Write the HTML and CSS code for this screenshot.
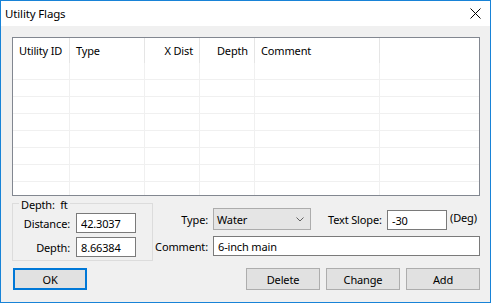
FILE: index.html
```html
<!DOCTYPE html>
<html>
<head>
<meta charset="utf-8">
<title>Utility Flags</title>
<link rel="stylesheet" href="styles.css">
</head>
<body>
<div class="window">
  <div class="titlebar">
    <span class="title">Utility Flags</span>
    <svg class="close" width="11" height="11" viewBox="0 0 11 11"><path d="M0.5 0.5L10.5 10.5M10.5 0.5L0.5 10.5" stroke="#000" stroke-width="1" fill="none"/></svg>
  </div>
  <div class="content">
    <div class="list">
      <div class="grid">
        <div class="hd">Utility ID</div>
        <div class="hd">Type</div>
        <div class="hd r">X Dist</div>
        <div class="hd r">Depth</div>
        <div class="hd">Comment</div>
        <div class="hd last"></div>

        <div class="cell"></div><div class="cell"></div><div class="cell"></div><div class="cell"></div><div class="cell"></div><div class="cell last"></div>
        <div class="cell"></div><div class="cell"></div><div class="cell"></div><div class="cell"></div><div class="cell"></div><div class="cell last"></div>
        <div class="cell"></div><div class="cell"></div><div class="cell"></div><div class="cell"></div><div class="cell"></div><div class="cell last"></div>
        <div class="cell"></div><div class="cell"></div><div class="cell"></div><div class="cell"></div><div class="cell"></div><div class="cell last"></div>
        <div class="cell"></div><div class="cell"></div><div class="cell"></div><div class="cell"></div><div class="cell"></div><div class="cell last"></div>
        <div class="cell"></div><div class="cell"></div><div class="cell"></div><div class="cell"></div><div class="cell"></div><div class="cell last"></div>
        <div class="cell"></div><div class="cell"></div><div class="cell"></div><div class="cell"></div><div class="cell"></div><div class="cell last"></div>
        <div class="cell"></div><div class="cell"></div><div class="cell"></div><div class="cell"></div><div class="cell"></div><div class="cell last"></div>
      </div>
    </div>

    <div class="lower">
      <fieldset class="group">
        <legend class="legend">Depth:&nbsp; ft</legend>
        <div class="field">
          <span class="flabel">Distance:</span>
          <input class="textbox short" type="text" value="42.3037">
        </div>
        <div class="field">
          <span class="flabel">Depth:</span>
          <input class="textbox short" type="text" value="8.66384">
        </div>
      </fieldset>

      <div class="right">
        <span class="rlabel">Type:</span>
        <div class="row1">
          <div class="combo">
            <span>Water</span>
            <svg class="chev" width="8" height="5" viewBox="0 0 8 5"><path d="M0.5 0.5L4 4L7.5 0.5" stroke="#606060" stroke-width="1" fill="none"/></svg>
          </div>
          <span class="slopelabel">Text Slope:</span>
          <input class="textbox short slope" type="text" value="-30">
          <span class="deg">(Deg)</span>
        </div>
        <span class="rlabel">Comment:</span>
        <input class="textbox wide" type="text" value="6-inch main">
      </div>
    </div>

    <div class="buttons">
      <button class="btn default">OK</button>
      <div class="actions">
        <button class="btn">Delete</button>
        <button class="btn">Change</button>
        <button class="btn">Add</button>
      </div>
    </div>
  </div>
</div>
</body>
</html>
```

FILE: styles.css
```css
* { box-sizing: border-box; }
html, body { margin: 0; padding: 0; }
body {
  width: 491px;
  height: 303px;
  overflow: hidden;
  font-family: "Noto Sans", "DejaVu Sans", sans-serif;
  font-size: 11px;
  letter-spacing: -0.15px;
  color: #000;
  background: #f0f0f0;
}
.window {
  width: 491px;
  height: 303px;
  border: 1px solid #1883d7;
  background: #f0f0f0;
  display: flex;
  flex-direction: column;
}
.titlebar {
  flex: none;
  height: 25px;
  background: #fff;
  display: flex;
  align-items: center;
  justify-content: space-between;
  padding: 0 9px 0 4px;
}
.title { line-height: 16px; font-size: 11.5px; }
.close { display: block; }

.content { padding: 11px 10px 0 11px; }

.list {
  height: 159px;
  border: 1px solid #828790;
  background: #fff;
  overflow: hidden;
}
.grid {
  display: grid;
  grid-template-columns: 57px 75px 55px 55px 125px 1fr;
  grid-template-rows: 25px;
  grid-auto-rows: 17px;
}
.hd {
  border-right: 1px solid #e5e5e5;
  padding: 1px 6px 0;
  line-height: 24px;
  white-space: nowrap;
}
.hd.r { text-align: right; }
.cell {
  border-right: 1px solid #f0f0f0;
  border-bottom: 1px solid #f0f0f0;
}
.hd.last, .cell.last { border-right: none; }

.lower { display: flex; }
.group {
  width: 141px;
  margin: 0;
  padding: 2px 0 3px 0;
  border: 1px solid #dcdcdc;
  min-width: 0;
}
.legend {
  margin-left: 6px;
  padding: 2px 2px 0;
  line-height: 13px;
}
.field {
  display: flex;
  align-items: center;
  height: 20px;
}
.field + .field { margin-top: 4px; }
.flabel {
  width: 57px;
  margin-right: 6px;
  text-align: right;
  white-space: nowrap;
}
.textbox {
  height: 20px;
  border: 1px solid #7a7a7a;
  background: #fff;
  font-family: inherit;
  font-size: 11px;
  letter-spacing: -0.15px;
  color: #000;
  padding: 0 4px;
  margin: 0;
  outline: none;
}
.textbox.short { width: 60px; }
.textbox.wide { width: 100%; }

.right {
  flex: 1;
  padding-top: 12px;
  display: grid;
  grid-template-columns: 55px 1fr;
  column-gap: 5px;
  row-gap: 6px;
  align-items: center;
  align-content: start;
}
.rlabel { text-align: right; white-space: nowrap; }
.row1 {
  display: flex;
  align-items: center;
  height: 22px;
}
.combo {
  width: 98px;
  height: 22px;
  border: 1px solid #acacac;
  background: #e5e5e5;
  display: flex;
  align-items: center;
  justify-content: space-between;
  padding: 0 6px 0 3px;
}
.chev { display: block; }
.slopelabel {
  width: 54px;
  margin-left: 17px;
  margin-right: 5px;
  white-space: nowrap;
}
.slope { align-self: flex-end; }
.deg { margin-left: 3px; margin-top: -3px; }

.buttons {
  display: flex;
  margin-top: 7px;
  padding-left: 1px;
}
.actions {
  margin-left: auto;
  display: flex;
  gap: 6px;
}
.btn {
  width: 74px;
  height: 22px;
  border: 1px solid #adadad;
  background: #e1e1e1;
  font-family: inherit;
  font-size: 11px;
  letter-spacing: -0.15px;
  color: #000;
  padding: 0;
  margin: 0;
}
.btn.default { border: 2px solid #0078d7; }
```
